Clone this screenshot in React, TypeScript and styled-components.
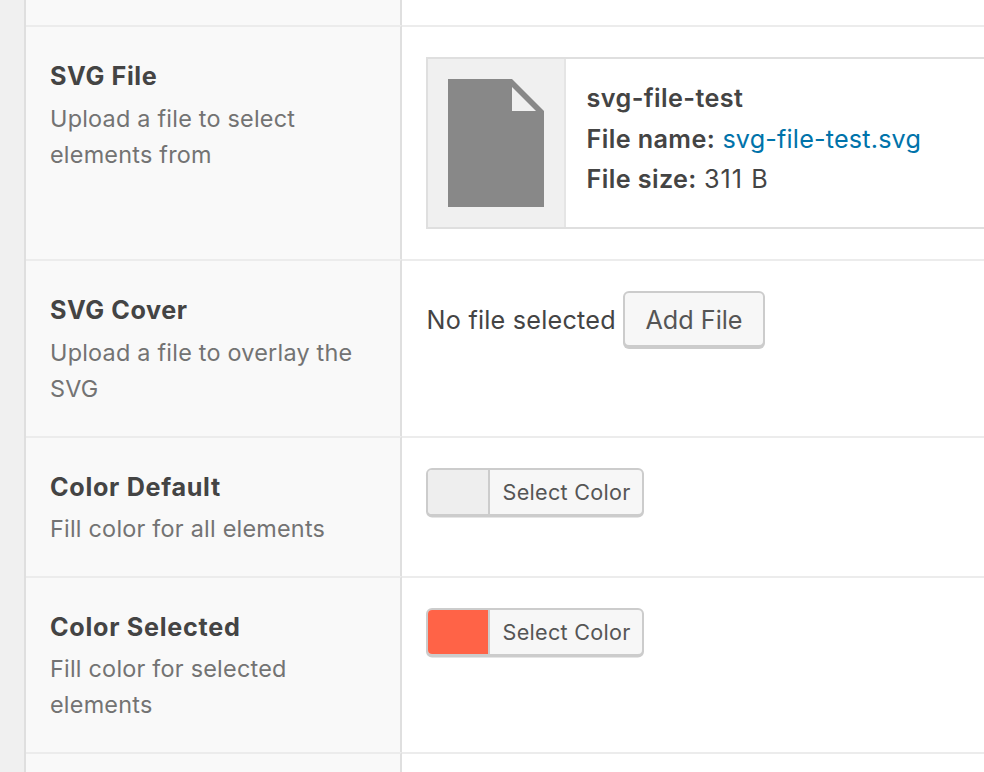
import React from "react";
import styled, { createGlobalStyle } from "styled-components";

const GlobalStyle = createGlobalStyle`
  html, body { margin: 0; padding: 0; }
  body { background: #f0f0f0; overflow: hidden; }
  *, *::before, *::after { box-sizing: border-box; }
`;

const Page = styled.main`
  width: 100vw;
  height: 100vh;
  padding-left: 24px;
  overflow: hidden;
  background: #f0f0f0;
  color: #444;
  font-family: Inter, "Liberation Sans", sans-serif;
  font-size: 25.2px;
  font-weight: 400;
  line-height: 36px;
`;

const Panel = styled.section`
  height: 100%;
  display: flex;
  flex-direction: column;
  background: #fff;
  border-left: 2px solid #dfdfdf;
  overflow: hidden;
`;

const FieldRow = styled.div<{ $height: number; $first?: boolean }>`
  flex: none;
  display: grid;
  grid-template-columns: 376px 1fr;
  height: ${(p) => p.$height}px;
  --line: ${(p) => (p.$first ? "0" : "2px")};
`;

const LabelCell = styled.div`
  padding: 31px 24px 0;
  background: #f9f9f9;
  border-top: var(--line) solid #ececec;
  border-right: 2px solid #dfdfdf;
`;

const InputCell = styled.div`
  min-width: 0;
  padding: 30px 0 0 24px;
  border-top: var(--line) solid #ececec;
`;

const Label = styled.h3<{ $tracking: number; $gap: number }>`
  margin: 0 0 ${(p) => p.$gap}px;
  font-size: 25.2px;
  font-weight: 700;
  line-height: 36px;
  letter-spacing: ${(p) => p.$tracking}px;
  white-space: nowrap;
`;

const Description = styled.p`
  margin: 0;
  color: #737373;
  font-size: 23.4px;
  line-height: 36px;
  letter-spacing: 0.23px;
`;

const FileCard = styled.div`
  display: flex;
  width: 700px;
  height: 172px;
  border: 2px solid #dfdfdf;
  background: #fff;
`;

const FileThumb = styled.div`
  flex: none;
  width: 138px;
  padding: 20px;
  background: #f0f0f0;
  border-right: 2px solid #e5e5e5;

  svg { display: block; }
`;

const FileInfo = styled.div`
  padding: 21px 0 0 20.6px;
  white-space: nowrap;
`;

const FileLine = styled.p<{ $gap?: number }>`
  margin: 0 0 ${(p) => p.$gap ?? 0}px;
  letter-spacing: 0.18px;
  line-height: 36px;
`;

const Strong = styled.strong`
  font-weight: 600;
  letter-spacing: 0.38px;
`;

const FileSize = styled.span`
  letter-spacing: 1px;
`;

const FileLink = styled.a`
  color: #0073aa;
  text-decoration: none;
`;

const Uploader = styled.div`
  display: flex;
  align-items: flex-start;
  gap: 8px;
`;

const EmptyText = styled.span`
  width: 189px;
  padding: 11px 0 0 0.6px;
  letter-spacing: 0.22px;
  white-space: nowrap;
`;

const Button = styled.button`
  width: 142px;
  height: 56px;
  padding: 1px 0 0;
  border: 2px solid #ccc;
  border-radius: 6px;
  background: #f7f7f7;
  box-shadow: 0 2px 0 #ccc;
  color: #555;
  font: inherit;
  line-height: 52px;
  white-space: nowrap;
`;

const ColorButton = styled.button`
  display: flex;
  width: 218px;
  height: 48px;
  padding: 0;
  overflow: hidden;
  border: 2px solid #ccc;
  border-radius: 6px;
  background: #f7f7f7;
  box-shadow: 0 1.6px 0 #ccc;
  color: #555;
  font: inherit;
`;

const Swatch = styled.span<{ $color: string }>`
  flex: none;
  width: 60px;
  height: 44px;
  background: ${(p) => p.$color};
`;

const ColorLabel = styled.span`
  flex: 1;
  height: 44px;
  padding-left: 12.6px;
  border-left: 2px solid #ccc;
  font-size: 21.6px;
  line-height: 44px;
  letter-spacing: 0.27px;
  text-align: left;
  white-space: nowrap;
`;

type FieldProps = {
  label: string;
  tracking: number;
  gap?: number;
  description: string;
  height: number;
  children: React.ReactNode;
};

function Field({ label, tracking, gap = 6, description, height, children }: FieldProps) {
  return (
    <FieldRow $height={height}>
      <LabelCell>
        <Label $tracking={tracking} $gap={gap}>{label}</Label>
        <Description>{description}</Description>
      </LabelCell>
      <InputCell>{children}</InputCell>
    </FieldRow>
  );
}

function DocumentIcon() {
  return (
    <svg width="96" height="128" viewBox="0 0 96 128" aria-hidden="true">
      <path d="M0 0H64L96 32V128H0Z" fill="#888" />
      <path d="M64 8V32H88Z" fill="#f0f0f0" />
    </svg>
  );
}

function ColorPicker({ color }: { color: string }) {
  return (
    <ColorButton type="button">
      <Swatch $color={color} />
      <ColorLabel>Select Color</ColorLabel>
    </ColorButton>
  );
}

export default function App() {
  return (
    <Page>
      <GlobalStyle />
      <Panel>
        <FieldRow $height={25} $first>
          <LabelCell />
          <InputCell />
        </FieldRow>
        <Field label="SVG File" tracking={0.6} gap={7} description="Upload a file to select elements from" height={234}>
          <FileCard>
            <FileThumb>
              <DocumentIcon />
            </FileThumb>
            <FileInfo>
              <FileLine $gap={5}>
                <Strong>svg-file-test</Strong>
              </FileLine>
              <FileLine $gap={4}>
                <Strong>File name:</Strong> <FileLink>svg-file-test.svg</FileLink>
              </FileLine>
              <FileLine>
                <Strong>File size:</Strong> <FileSize>311 B</FileSize>
              </FileLine>
            </FileInfo>
          </FileCard>
        </Field>
        <Field label="SVG Cover" tracking={0.53} gap={7} description="Upload a file to overlay the SVG" height={177}>
          <Uploader>
            <EmptyText>No file selected</EmptyText>
            <Button type="button">Add File</Button>
          </Uploader>
        </Field>
        <Field label="Color Default" tracking={0.68} description="Fill color for all elements" height={140}>
          <ColorPicker color="#eeeeee" />
        </Field>
        <Field label="Color Selected" tracking={0.71} description="Fill color for selected elements" height={176}>
          <ColorPicker color="#ff6347" />
        </Field>
        <FieldRow $height={40}>
          <LabelCell />
          <InputCell />
        </FieldRow>
      </Panel>
    </Page>
  );
}
